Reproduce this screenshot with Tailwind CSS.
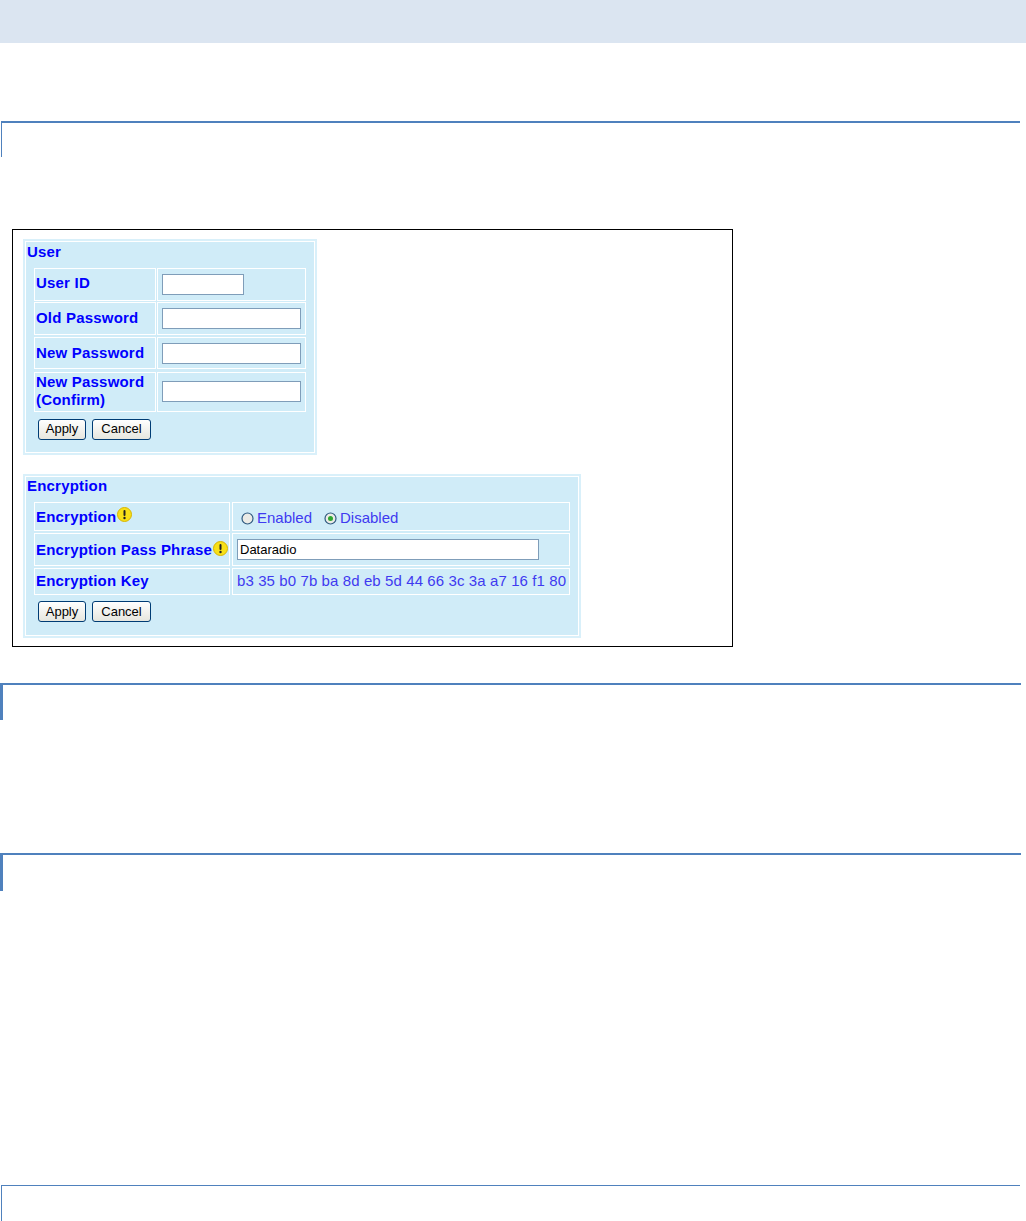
<!DOCTYPE html>
<html lang="en">
<head>
  <meta charset="UTF-8" />
  <title>User and Encryption settings</title>
  <script src="https://cdn.jsdelivr.net/npm/@tailwindcss/browser@4"></script>
</head>
<body class="bg-white w-[1026px] h-[1221px] overflow-hidden font-['Liberation_Sans',Arial,sans-serif]">

  <!-- Top band -->
  <div class="h-[43px] bg-[#dbe5f1]"></div>

  <!-- Heading 1 -->
  <div class="mt-[78px] ml-px w-[1019px] h-[36px] border-t-2 border-l border-[#4f81bd]"></div>

  <!-- Screenshot frame -->
  <div class="mt-[72px] ml-[12px] w-[721px] h-[418px] border border-black pl-[10px] pt-[9px]">

    <!-- User panel -->
    <div class="w-[294px] h-[216px] bg-[#d0ecf8] border-2 border-[#d9f0fa] outline outline-white -outline-offset-3">
      <div class="pl-[2px] pt-[3px] text-[15px] tracking-[0.2px] leading-[16px] font-bold text-[#0000ff]">User</div>
      <div class="mt-[8px] ml-[9px] text-[15px] tracking-[0.2px] leading-[17px] font-bold text-[#0000ff]">
        <div class="flex gap-px h-[33px]">
          <div class="w-[122px] border border-white pl-px pt-[5px]">User ID</div>
          <div class="w-[149px] border border-white pl-[4px] pt-[5px]"><input type="text" class="block w-[82px] h-[21px] bg-white border border-[#7f9db9]" /></div>
        </div>
        <div class="flex gap-px h-[33px] mt-px">
          <div class="w-[122px] border border-white pl-px pt-[6px]">Old Password</div>
          <div class="w-[149px] border border-white pl-[4px] pt-[5px]"><input type="password" class="block w-[139px] h-[21px] bg-white border border-[#7f9db9]" /></div>
        </div>
        <div class="flex gap-px h-[32px] mt-[2px]">
          <div class="w-[122px] border border-white pl-px pt-[6px]">New Password</div>
          <div class="w-[149px] border border-white pl-[4px] pt-[5px]"><input type="password" class="block w-[139px] h-[21px] bg-white border border-[#7f9db9]" /></div>
        </div>
        <div class="flex gap-px h-[40px] mt-[3px]">
          <div class="w-[122px] border border-white pl-px leading-[18px]">New Password (Confirm)</div>
          <div class="w-[149px] border border-white pl-[4px] pt-[8px]"><input type="password" class="block w-[139px] h-[21px] bg-white border border-[#7f9db9]" /></div>
        </div>
      </div>
      <div class="flex gap-[6px] mt-[7px] ml-[13px]">
        <button class="w-[48px] h-[21px] pb-[2px] text-[13px] leading-[17px] text-black bg-gradient-to-b from-white to-[#e6e6de] border border-[#003c74] rounded-[3px]">Apply</button>
        <button class="w-[59px] h-[21px] pb-[2px] text-[13px] leading-[17px] text-black bg-gradient-to-b from-white to-[#e6e6de] border border-[#003c74] rounded-[3px]">Cancel</button>
      </div>
    </div>

    <!-- Encryption panel -->
    <div class="mt-[19px] w-[558px] h-[164px] bg-[#d0ecf8] border-2 border-[#d9f0fa] outline outline-white -outline-offset-3">
      <div class="pl-[2px] pt-px pb-px text-[15px] tracking-[0.2px] leading-[18px] font-bold text-[#0000ff]">Encryption</div>
      <div class="mt-[6px] ml-[9px] text-[15px] tracking-[0.2px] leading-[17px] font-bold text-[#0000ff]">
        <div class="flex gap-[2px] h-[29px]">
          <div class="w-[196px] border border-white pl-px pt-[5px] flex items-start">
            Encryption
            <svg class="w-[15px] h-[15px] -mt-px ml-px" viewBox="0 0 15 15"><circle cx="7.5" cy="7.5" r="7" fill="#f7e017" stroke="#d8b400" /><rect x="6.5" y="3" width="2" height="6" rx="1" fill="#222" /><circle cx="7.5" cy="11" r="1.2" fill="#222" /></svg>
          </div>
          <div class="w-[338px] border border-white pl-[8px] pt-[6px] flex items-center h-[29px] text-[15px] tracking-normal font-normal text-[#3f3af0]">
            <svg class="w-[13px] h-[13px] -mt-[3px] mr-[3px]" viewBox="0 0 13 13"><circle cx="6.5" cy="6.5" r="5.5" fill="#ebebe6" stroke="#2f5a80" stroke-width="1.2" /></svg>
            <span class="-mt-[4px] w-[67px]">Enabled</span>
            <svg class="w-[13px] h-[13px] -mt-[3px] mr-[3px]" viewBox="0 0 13 13"><circle cx="6.5" cy="6.5" r="5.5" fill="#ebebe6" stroke="#2f5a80" stroke-width="1.2" /><circle cx="6.5" cy="6.5" r="2.5" fill="#2fa82f" /></svg>
            <span class="-mt-[4px]">Disabled</span>
          </div>
        </div>
        <div class="flex gap-[2px] h-[33px] mt-[2px]">
          <div class="w-[196px] border border-white pl-px pt-[7px] flex items-start whitespace-nowrap">
            Encryption Pass Phrase
            <svg class="w-[15px] h-[15px] ml-px" viewBox="0 0 15 15"><circle cx="7.5" cy="7.5" r="7" fill="#f7e017" stroke="#d8b400" /><rect x="6.5" y="3" width="2" height="6" rx="1" fill="#222" /><circle cx="7.5" cy="11" r="1.2" fill="#222" /></svg>
          </div>
          <div class="w-[338px] border border-white pl-[4px] pt-[5px]"><input type="text" value="Dataradio" class="block w-[302px] h-[21px] px-[2px] bg-white border border-[#7f9db9] text-[13px] tracking-normal font-normal text-black" /></div>
        </div>
        <div class="flex gap-[2px] h-[27px] mt-[2px]">
          <div class="w-[196px] border border-white pl-px pt-[3px]">Encryption Key</div>
          <div class="w-[338px] border border-white pl-[4px] pt-[3px] text-[15px] tracking-[0.1px] font-normal text-[#3f3af0] whitespace-nowrap">b3 35 b0 7b ba 8d eb 5d 44 66 3c 3a a7 16 f1 80</div>
        </div>
      </div>
      <div class="flex gap-[6px] mt-[6px] ml-[13px]">
        <button class="w-[48px] h-[21px] text-[13px] leading-[17px] text-black bg-gradient-to-b from-white to-[#e6e6de] border border-[#003c74] rounded-[3px]">Apply</button>
        <button class="w-[59px] h-[21px] text-[13px] leading-[17px] text-black bg-gradient-to-b from-white to-[#e6e6de] border border-[#003c74] rounded-[3px]">Cancel</button>
      </div>
    </div>
  </div>

  <!-- Headings 2-4 -->
  <div class="mt-[36px] w-[1021px] h-[37px] border-t-2 border-l-[3px] border-[#4f81bd]"></div>
  <div class="mt-[133px] w-[1021px] h-[38px] border-t-2 border-l-[3px] border-[#4f81bd]"></div>
  <div class="mt-[294px] ml-px w-[1019px] h-[36px] border-t border-l border-[#4f81bd]"></div>

</body>
</html>
